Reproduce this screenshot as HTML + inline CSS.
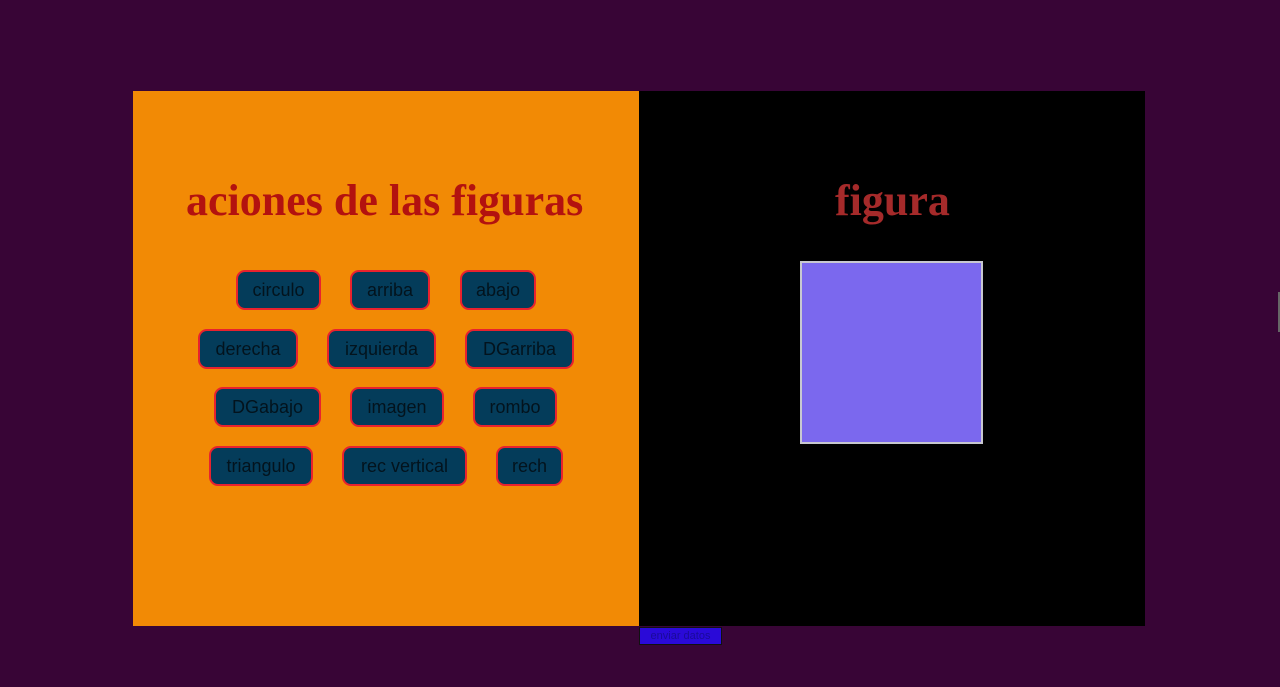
<!DOCTYPE html>
<html><head><style>
body{margin:0;width:1280px;height:687px;background:#380536;position:relative;overflow:hidden;font-family:"Liberation Sans",sans-serif}
.l{position:absolute;left:133px;top:91px;width:506px;height:535px;background:#f28a05}
.r{position:absolute;left:639px;top:91px;width:506px;height:535px;background:#000}
h1{position:absolute;margin:0;font-family:"Liberation Serif",serif;font-weight:bold;font-size:44px;top:175px;white-space:nowrap}
.b{position:absolute;height:36px;background:#043c5a;border:2px solid #e8222e;border-radius:9px;box-sizing:content-box;color:#03131d;font-size:18px;line-height:36px;text-align:center}
</style></head><body>
<div class="l"></div><div class="r"></div>
<h1 style="left:186px;color:#b3120f">aciones de las figuras</h1>
<h1 style="left:835px;color:#a52a2a">figura</h1>
<div class="b" style="left:236px;top:270px;width:81px">circulo</div>
<div class="b" style="left:350px;top:270px;width:76px">arriba</div>
<div class="b" style="left:460px;top:270px;width:72px">abajo</div>
<div class="b" style="left:198px;top:329px;width:96px">derecha</div>
<div class="b" style="left:327px;top:329px;width:105px">izquierda</div>
<div class="b" style="left:465px;top:329px;width:105px">DGarriba</div>
<div class="b" style="left:214px;top:387px;width:103px">DGabajo</div>
<div class="b" style="left:350px;top:387px;width:90px">imagen</div>
<div class="b" style="left:473px;top:387px;width:80px">rombo</div>
<div class="b" style="left:209px;top:446px;width:100px">triangulo</div>
<div class="b" style="left:342px;top:446px;width:121px">rec vertical</div>
<div class="b" style="left:496px;top:446px;width:63px">rech</div>
<div style="position:absolute;left:800px;top:261px;width:179px;height:179px;background:#7b68ee;border:2px solid #c8c8d0"></div>
<div style="position:absolute;left:639px;top:627px;width:81px;height:16px;background:#2a0ad8;border:1px solid #111;color:#1a0a9a;font-size:11px;line-height:16px;text-align:center">enviar datos</div>
<div style="position:absolute;left:1278px;top:292px;width:2px;height:40px;background:#666"></div>
</body></html>
